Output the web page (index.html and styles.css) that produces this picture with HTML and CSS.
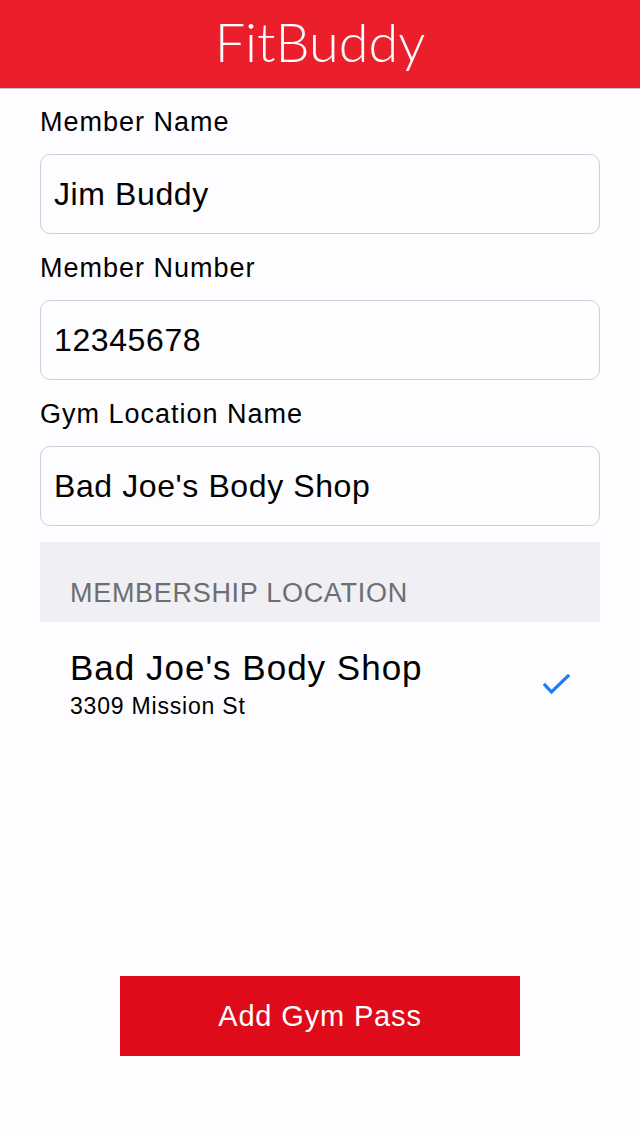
FILE: index.html
```html
<!DOCTYPE html>
<html lang="en">
<head>
<meta charset="utf-8">
<title>FitBuddy</title>
<link rel="stylesheet" href="styles.css">
</head>
<body>
<header class="topbar">
  <h1 class="title">FitBuddy</h1>
</header>
<main class="content">
  <div class="field">
    <label class="field-label">Member Name</label>
    <div class="field-input">Jim Buddy</div>
  </div>
  <div class="field">
    <label class="field-label">Member Number</label>
    <div class="field-input">12345678</div>
  </div>
  <div class="field">
    <label class="field-label">Gym Location Name</label>
    <div class="field-input">Bad Joe's Body Shop</div>
  </div>
  <section class="locations">
    <div class="section-header">MEMBERSHIP LOCATION</div>
    <div class="location-row">
      <div class="location-text">
        <div class="location-name">Bad Joe's Body Shop</div>
        <div class="location-address">3309 Mission St</div>
      </div>
      <svg class="check" width="28" height="22" viewBox="0 0 28 22">
        <polyline points="3,11 9.5,18 26,2" fill="none" stroke="#1a7ff0" stroke-width="3.2" stroke-linecap="square" stroke-linejoin="miter"/>
      </svg>
    </div>
  </section>
  <div class="actions">
    <button class="primary-btn">Add Gym Pass</button>
  </div>
</main>
</body>
</html>
```
FILE: styles.css
```css
* { box-sizing: border-box; }
html, body { margin: 0; padding: 0; }
body {
  background: #fdfcfe;
  font-family: "Liberation Sans", Arial, sans-serif;
  color: #000;
  width: 640px;
  min-height: 1136px;
}
.topbar {
  height: 89px;
  background: #ea1f2b;
  border-bottom: 1px solid #c4c4c4;
  display: flex;
  align-items: center;
  justify-content: center;
}
.title {
  margin: 0;
  color: #fff;
  font-family: "Lato", sans-serif;
  font-weight: 300;
  font-size: 54px;
  line-height: 1;
  padding-bottom: 4px;
}
.content {
  padding: 18px 40px 0;
  display: flex;
  flex-direction: column;
}
.field {
  display: flex;
  flex-direction: column;
  margin-bottom: 19px;
}
.field:nth-child(3) { margin-bottom: 16px; }
.field-label {
  font-size: 27px;
  letter-spacing: 1px;
  line-height: 30px;
  margin-bottom: 17px;
}
.field-input {
  height: 80px;
  border: 1px solid #cfcfd3;
  border-radius: 10px;
  background: #fdfcfe;
  padding: 0 13px;
  display: flex;
  align-items: center;
  font-size: 32px;
  letter-spacing: 0.6px;
}
.section-header {
  height: 80px;
  background: #efeff4;
  color: #6d6d72;
  font-size: 27px;
  letter-spacing: 0.7px;
  padding: 0 30px 14px;
  display: flex;
  align-items: flex-end;
  line-height: 30px;
}
.location-row {
  display: flex;
  align-items: center;
  justify-content: space-between;
  padding: 26px 30px 0 30px;
}
.location-name {
  font-size: 35px;
  letter-spacing: 1px;
  line-height: 40px;
}
.location-address {
  font-size: 23px;
  letter-spacing: 0.8px;
  line-height: 30px;
  margin-top: 3px;
}
.check {
  margin-top: 0;
}
.actions {
  display: flex;
  justify-content: center;
  margin-top: 255px;
}
.primary-btn {
  width: 400px;
  height: 80px;
  border: none;
  background: #e00b1a;
  color: #fff;
  font-family: "Liberation Sans", Arial, sans-serif;
  font-size: 29px;
  letter-spacing: 0.85px;
}
```
